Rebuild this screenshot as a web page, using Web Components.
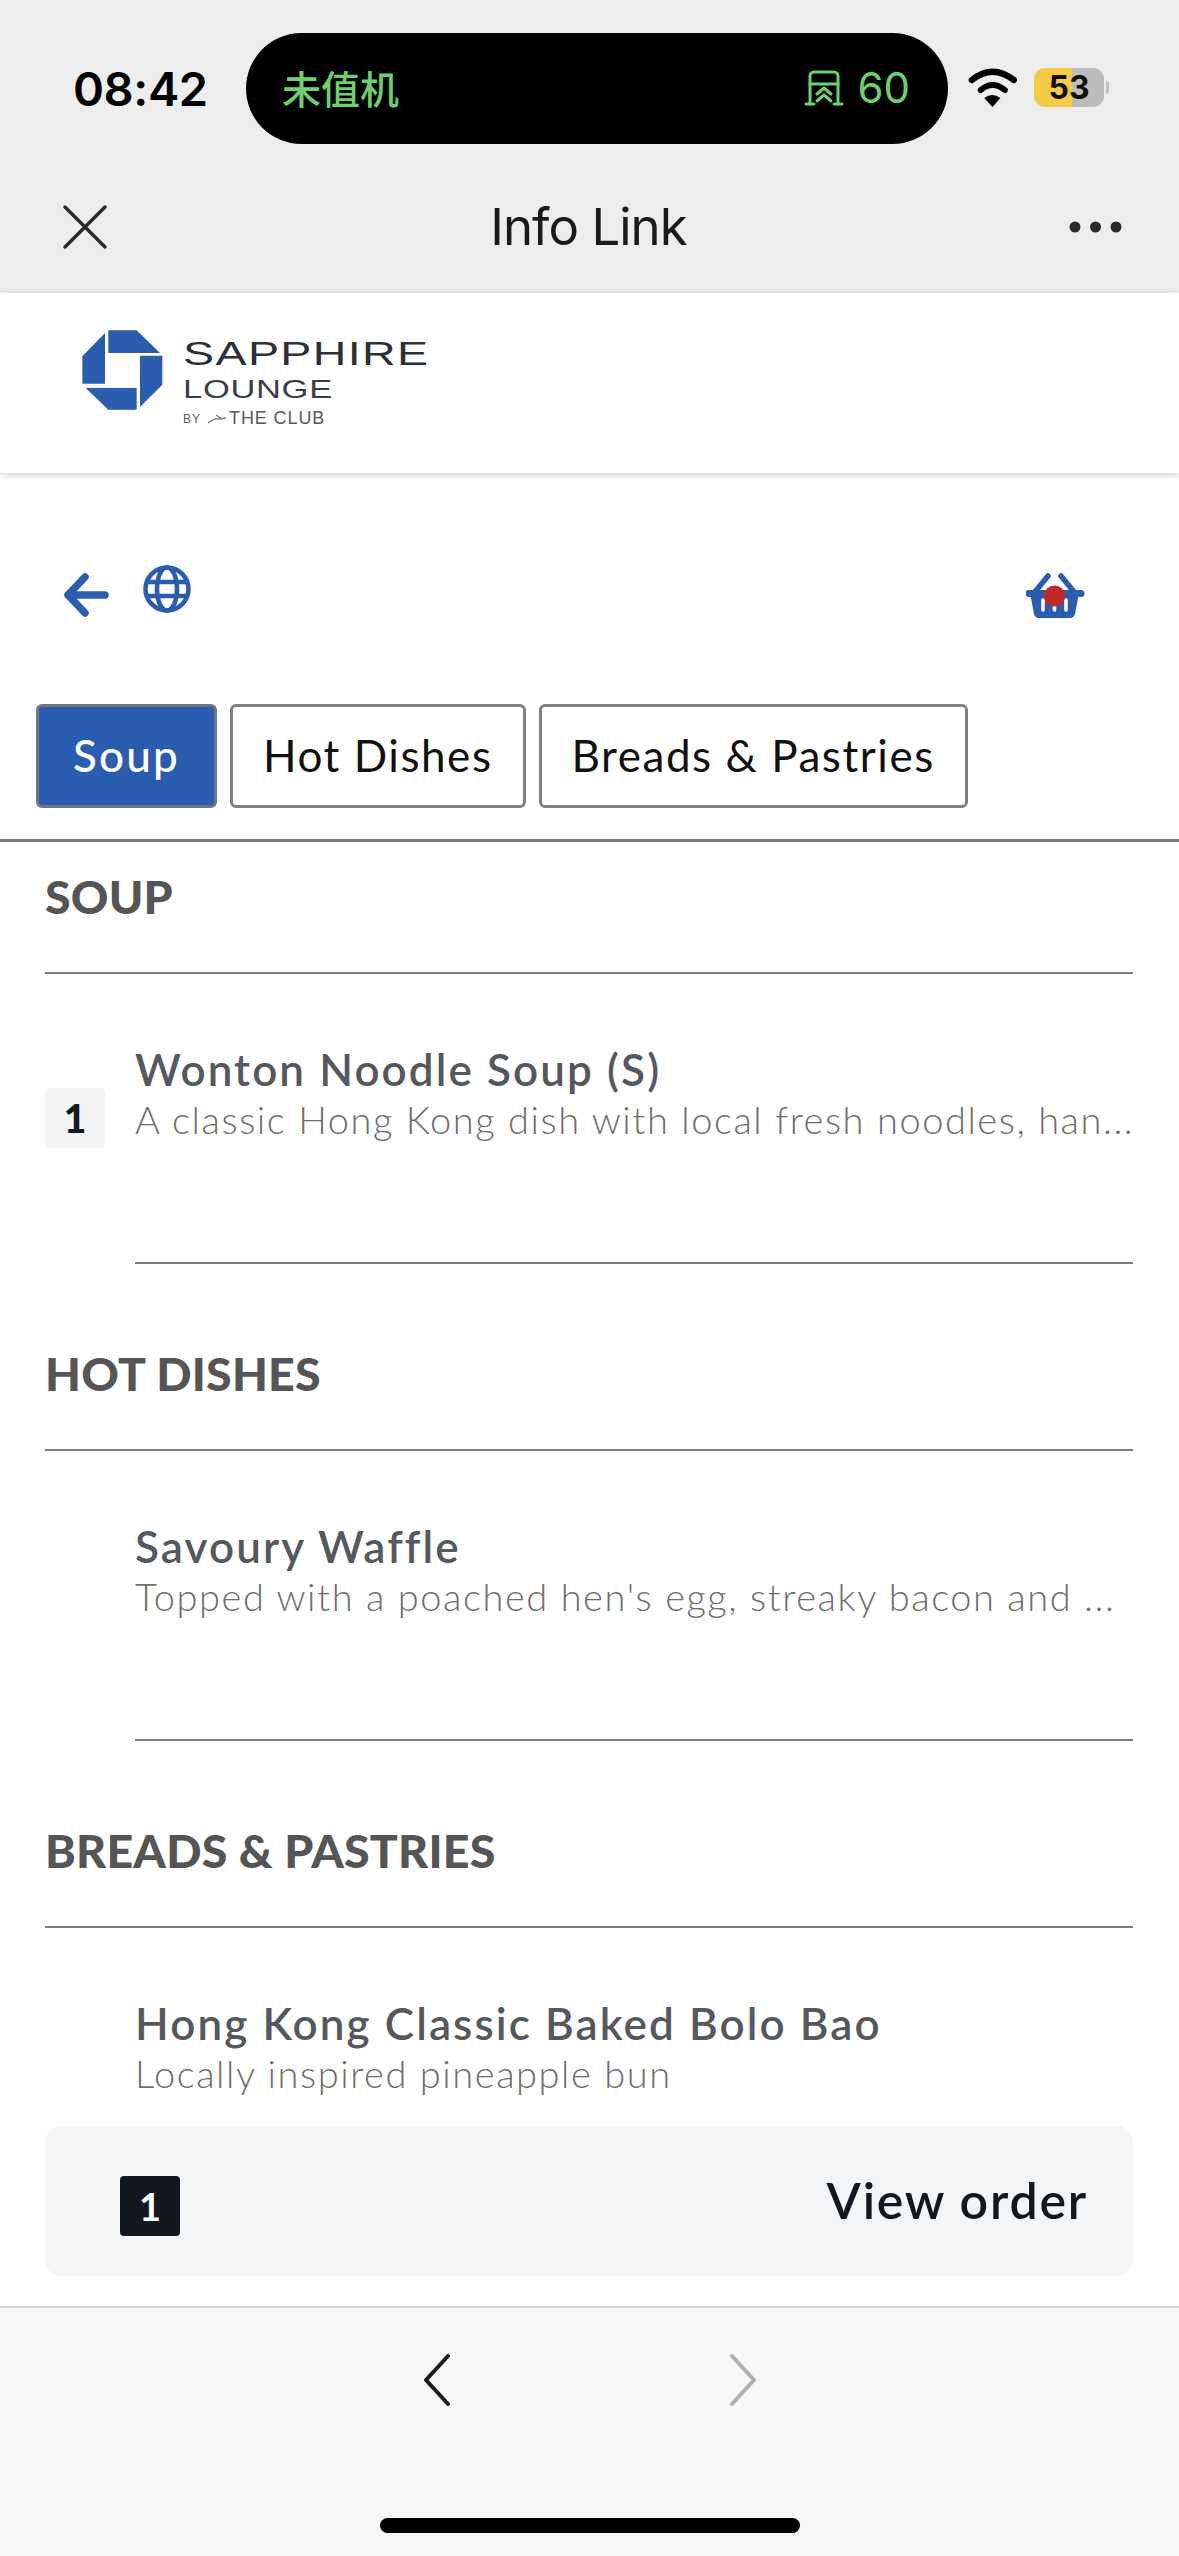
<!DOCTYPE html>
<html>
<head>
<meta charset="utf-8">
<title>Info Link</title>
<style>
  html, body { margin: 0; padding: 0; background: #fff; }
  body { width: 1179px; height: 2556px; display: flex; flex-direction: column; overflow: hidden; font-family: "Lato", "Noto Sans CJK SC", sans-serif; }
  menu-list { flex: 1; min-height: 0; }
</style>
</head>
<body>
<status-bar time="08:42" flight="未值机" gate="60" battery="53"></status-bar>
<nav-bar>Info Link</nav-bar>
<logo-bar></logo-bar>
<tool-bar></tool-bar>
<menu-tabs>
  <tab-button active>Soup</tab-button>
  <tab-button>Hot Dishes</tab-button>
  <tab-button>Breads &amp; Pastries</tab-button>
</menu-tabs>
<menu-list>
  <menu-section heading="SOUP">
    <menu-item name="Wonton Noodle Soup (S)" desc="A classic Hong Kong dish with local fresh noodles, han..." qty="1"></menu-item>
  </menu-section>
  <menu-section heading="HOT DISHES">
    <menu-item name="Savoury Waffle" desc="Topped with a poached hen's egg, streaky bacon and ..."></menu-item>
  </menu-section>
  <menu-section heading="BREADS &amp; PASTRIES">
    <menu-item name="Hong Kong Classic Baked Bolo Bao" desc="Locally inspired pineapple bun"></menu-item>
  </menu-section>
</menu-list>
<order-bar count="1">View order</order-bar>
<browser-footer></browser-footer>

<script>
class StatusBar extends HTMLElement {
  connectedCallback() {
    this.attachShadow({ mode: 'open' });
    this.shadowRoot.innerHTML = `
      <style>
        :host { display: flex; align-items: flex-start; height: 180px; background: #ededed; box-sizing: border-box; padding: 33px 0 0 73px; }
        .time { width: 173px; height: 111px; display: flex; align-items: center; font: 600 47px "Inter", sans-serif; color: #000; letter-spacing: -.4px; }
        .pill { width: 702px; height: 111px; border-radius: 56px; background: #000; color: #6dd06e; display: flex; align-items: center; justify-content: space-between; box-sizing: border-box; padding: 0 38px 0 36px; }
        .flight { font: 500 39px "Noto Sans CJK SC", sans-serif; margin-top: -3px; }
        .gate { display: flex; align-items: center; gap: 13px; font: 42px "Inter", sans-serif; margin-top: -2px; }
        .wifi { margin: 35px 0 0 20px; width: 50px; height: 40px; }
        .battery { margin: 35px 0 0 16px; width: 70px; height: 39px; border-radius: 11px; position: relative; background: linear-gradient(90deg, #f5cb46 0 38px, #bcbcbc 38px); display: flex; align-items: center; justify-content: center; font: 700 32px "Inter", sans-serif; color: #111; }
        .battery::after { content: ""; position: absolute; right: -5px; top: 13px; width: 3px; height: 13px; border-radius: 0 4px 4px 0; background: #c4c4c4; }
      </style>
      <div class="time">${this.getAttribute('time')}</div>
      <div class="pill">
        <span class="flight">${this.getAttribute('flight')}</span>
        <span class="gate">
          <svg width="40" height="36" viewBox="0 0 40 36" fill="none" stroke="#6dd06e" stroke-width="3" stroke-linecap="round" stroke-linejoin="round">
            <path d="M6 34V6a4 4 0 0 1 4-4h20a4 4 0 0 1 4 4v28"/><path d="M6 14h28"/><path d="M2 34h8M30 34h8"/>
            <path d="M13 24l7-6 7 6M13 31l7-6 7 6"/>
          </svg>
          ${this.getAttribute('gate')}
        </span>
      </div>
      <svg class="wifi" viewBox="25 85 145 116">
        <path d="M36 120Q96 72 158 120" fill="none" stroke="#000" stroke-width="18" stroke-linecap="round"/>
        <path d="M62 149Q96 120 132 149" fill="none" stroke="#000" stroke-width="17" stroke-linecap="round"/>
        <path d="M72 172Q95 154 119 172L96 198Z" fill="#000"/>
      </svg>
      <div class="battery">${this.getAttribute('battery')}</div>
    `;
  }
}
customElements.define('status-bar', StatusBar);

class NavBar extends HTMLElement {
  connectedCallback() {
    this.attachShadow({ mode: 'open' });
    this.shadowRoot.innerHTML = `
      <style>
        :host { display: flex; align-items: center; justify-content: space-between; height: 113px; background: #ededed; box-sizing: border-box; padding: 0 57px 20px 63px; color: #1a1a1a; }
        .title { font: 400 51px "Inter", sans-serif; letter-spacing: -1px; margin-left: -8px; }
        .side { width: 53px; display: flex; }
        .side.end { justify-content: flex-end; }
      </style>
      <div class="side">
        <svg width="44" height="44" viewBox="0 0 44 44" stroke="#2a2a2a" stroke-width="3.4" stroke-linecap="round"><path d="M2 2L42 42M42 2L2 42"/></svg>
      </div>
      <div class="title"><slot></slot></div>
      <div class="side end">
        <svg width="53" height="12" viewBox="0 0 53 12" fill="#2a2a2a"><circle cx="6" cy="6" r="5.5"/><circle cx="26.5" cy="6" r="5.5"/><circle cx="47" cy="6" r="5.5"/></svg>
      </div>
    `;
  }
}
customElements.define('nav-bar', NavBar);

class LogoBar extends HTMLElement {
  connectedCallback() {
    this.attachShadow({ mode: 'open' });
    this.shadowRoot.innerHTML = `
      <style>
        :host { display: flex; align-items: flex-start; height: 180px; background: #fff; box-sizing: border-box; padding: 35px 0 0 80px; box-shadow: 0 2px 7px rgba(0,0,0,.18); position: relative; z-index: 1; }
        .mark { width: 85px; height: 85px; margin-right: 18px; flex: none; }
        .words { display: flex; flex-direction: column; color: #2b3038; font-family: "Liberation Sans", sans-serif; padding-top: 10px; }
        .l1 { font-size: 34px; line-height: 30px; letter-spacing: 1px; transform: scaleX(1.37); transform-origin: 0 0; white-space: nowrap; }
        .l2 { font-size: 25px; line-height: 24px; margin-top: 9px; letter-spacing: .5px; transform: scaleX(1.38); transform-origin: 0 0; white-space: nowrap; color: #3a3f46; }
        .l3 { display: flex; align-items: center; margin-top: 7px; color: #555a60; }
        .by { font-size: 12px; letter-spacing: 1px; width: 25px; }
        .club { font-size: 18px; letter-spacing: .9px; margin-left: 3px; }
      </style>
      <svg class="mark" viewBox="120 85 255 255" fill="#2a5db0">
        <path d="M205 92H290L360 160H205Z"/>
        <path d="M300 168H367V255L300 322Z"/>
        <path d="M137 265H290V330H205Z"/>
        <path d="M195 100V252H127V170Z"/>
      </svg>
      <div class="words">
        <div class="l1">SAPPHIRE</div>
        <div class="l2">LOUNGE</div>
        <div class="l3"><span class="by">BY</span><svg width="18" height="10" viewBox="0 0 18 10" fill="none" stroke="#777" stroke-width="1.4"><path d="M0 9Q6 4 12 5L18 4M8 1L14 5"/></svg><span class="club">THE CLUB</span></div>
      </div>
    `;
  }
}
customElements.define('logo-bar', LogoBar);

class ToolBar extends HTMLElement {
  connectedCallback() {
    this.attachShadow({ mode: 'open' });
    this.shadowRoot.innerHTML = `
      <style>
        :host { display: flex; align-items: flex-start; height: 231px; box-sizing: border-box; padding: 92px 93px 0 63px; }
        .arrow { margin: 8px 0 0 0; }
        .globe { margin-left: 34px; }
        .basket { margin-left: auto; margin-top: 8px; }
      </style>
      <svg class="arrow" width="46" height="44" viewBox="0 0 46 44" fill="none" stroke="#2a5db0" stroke-width="7.5" stroke-linecap="round" stroke-linejoin="round"><path d="M42 22H5M22 4L5 22L22 40"/></svg>
      <svg class="globe" width="48" height="48" viewBox="0 0 48 48" fill="none" stroke="#2a5db0" stroke-width="4.6">
        <circle cx="24" cy="24" r="21.5"/>
        <ellipse cx="24" cy="24" rx="10" ry="21.5"/>
        <path d="M4 17H44M4 31H44"/>
      </svg>
      <svg class="basket" width="60" height="46" viewBox="0 0 60 46" fill="none">
        <path d="M3 20.500H55" stroke="#2a5db0" stroke-width="7" stroke-linecap="round"/>
        <path d="M4 20H53L49 41a5 5 0 0 1-5 4H13a5 5 0 0 1-5-4Z" fill="#2a5db0"/>
        <path d="M22 3L8 20M35 3L49 20" stroke="#2a5db0" stroke-width="5.5" stroke-linecap="round"/>
        <path d="M17 27V37M28.500 31V37M40 27V37" stroke="#fff" stroke-width="3.6" stroke-linecap="round"/>
        <circle cx="28.500" cy="23" r="10.500" fill="#c22a2a"/>
      </svg>
    `;
  }
}
customElements.define('tool-bar', ToolBar);

class MenuTabs extends HTMLElement {
  connectedCallback() {
    this.attachShadow({ mode: 'open' });
    this.shadowRoot.innerHTML = `
      <style>
        :host { display: flex; gap: 13px; box-sizing: border-box; height: 138px; padding: 0 36px 31px; border-bottom: 3px solid #7d7d7d; }
      </style>
      <slot></slot>
    `;
  }
}
customElements.define('menu-tabs', MenuTabs);

class TabButton extends HTMLElement {
  connectedCallback() {
    this.attachShadow({ mode: 'open' });
    this.shadowRoot.innerHTML = `
      <style>
        :host { display: flex; align-items: center; box-sizing: border-box; height: 104px; padding: 0 30px 3px; border: 3px solid #808080; border-radius: 6px; background: #fff; color: #111; font: 400 44px "Lato", sans-serif; letter-spacing: 1.55px; }
        :host([active]) { background: #2a5db0; color: #fff; border-color: #6f7683; font-weight: 500; letter-spacing: 2.2px; padding: 0 34px 3px; }
      </style>
      <slot></slot>
    `;
  }
}
customElements.define('tab-button', TabButton);

class MenuList extends HTMLElement {
  connectedCallback() {
    this.attachShadow({ mode: 'open' });
    this.shadowRoot.innerHTML = `
      <style>
        :host { display: flex; flex-direction: column; gap: 56px; overflow: hidden; padding: 1px 46px 0 45px; }
      </style>
      <slot></slot>
    `;
  }
}
customElements.define('menu-list', MenuList);

class MenuSection extends HTMLElement {
  connectedCallback() {
    this.attachShadow({ mode: 'open' });
    this.shadowRoot.innerHTML = `
      <style>
        :host { display: block; flex: none; }
        h2 { margin: 0; height: 129px; box-sizing: content-box; border-bottom: 2.5px solid #7d7d7d; font: 900 46.500px/107px "Lato", sans-serif; letter-spacing: .2px; color: #555; }
      </style>
      <h2>${this.getAttribute('heading').replace('&', '&amp;')}</h2>
      <slot></slot>
    `;
  }
}
customElements.define('menu-section', MenuSection);

class MenuItem extends HTMLElement {
  connectedCallback() {
    this.attachShadow({ mode: 'open' });
    const qty = this.getAttribute('qty');
    this.shadowRoot.innerHTML = `
      <style>
        :host { display: flex; height: 290px; box-sizing: border-box; }
        .qty-col { width: 90px; flex: none; padding-top: 114px; box-sizing: border-box; }
        .qty { width: 60px; height: 60px; border-radius: 5px; background: #f3f4f6; display: flex; align-items: center; justify-content: center; font: 900 39px "Lato", sans-serif; color: #121820; }
        .body { flex: 1; min-width: 0; padding-top: 68px; border-bottom: 2.5px solid #7d7d7d; white-space: nowrap; }
        .name { font: 600 44px/54px "Lato", sans-serif; color: #55585c; letter-spacing: 2.1px; }
        .desc { font: 300 38px/46px "Lato", sans-serif; color: #6e6e6e; letter-spacing: 1.55px; }
      </style>
      <div class="qty-col">${qty ? `<div class="qty">${qty}</div>` : ''}</div>
      <div class="body">
        <div class="name">${this.getAttribute('name')}</div>
        <div class="desc">${this.getAttribute('desc')}</div>
      </div>
    `;
  }
}
customElements.define('menu-item', MenuItem);

class OrderBar extends HTMLElement {
  connectedCallback() {
    this.attachShadow({ mode: 'open' });
    this.shadowRoot.innerHTML = `
      <style>
        :host { display: block; flex: none; box-sizing: border-box; padding: 16px 46px 30px 45px; background: #fff; }
        .bar { height: 150px; border-radius: 16px; background: #f4f5f7; display: flex; align-items: center; justify-content: space-between; box-sizing: border-box; padding: 0 45px 0 75px; color: #121820; }
        .count { width: 60px; height: 60px; margin-top: 10px; border-radius: 4px; background: #121820; color: #fff; display: flex; align-items: center; justify-content: center; font: 700 38px "Lato", sans-serif; }
        .label { font: 600 50px "Lato", sans-serif; letter-spacing: 1.8px; margin-top: -2px; }
      </style>
      <div class="bar"><div class="count">${this.getAttribute('count')}</div><div class="label"><slot></slot></div></div>
    `;
  }
}
customElements.define('order-bar', OrderBar);

class BrowserFooter extends HTMLElement {
  connectedCallback() {
    this.attachShadow({ mode: 'open' });
    this.shadowRoot.innerHTML = `
      <style>
        :host { display: flex; flex-direction: column; align-items: center; flex: none; height: 250px; box-sizing: border-box; background: #f7f7f7; border-top: 2px solid #d6d6d6; padding-top: 46px; }
        .arrows { display: flex; gap: 278px; height: 52px; }
        .home { width: 420px; height: 15px; border-radius: 8px; background: #000; margin-top: 112px; }
      </style>
      <div class="arrows">
        <svg width="28" height="52" viewBox="0 0 28 52" fill="none" stroke="#1c1c1c" stroke-width="4" stroke-linecap="round" stroke-linejoin="round"><path d="M25 2L3 26L25 50"/></svg>
        <svg width="28" height="52" viewBox="0 0 28 52" fill="none" stroke="#b0b0b0" stroke-width="4" stroke-linecap="round" stroke-linejoin="round"><path d="M3 2L25 26L3 50"/></svg>
      </div>
      <div class="home"></div>
    `;
  }
}
customElements.define('browser-footer', BrowserFooter);
</script>
</body>
</html>
